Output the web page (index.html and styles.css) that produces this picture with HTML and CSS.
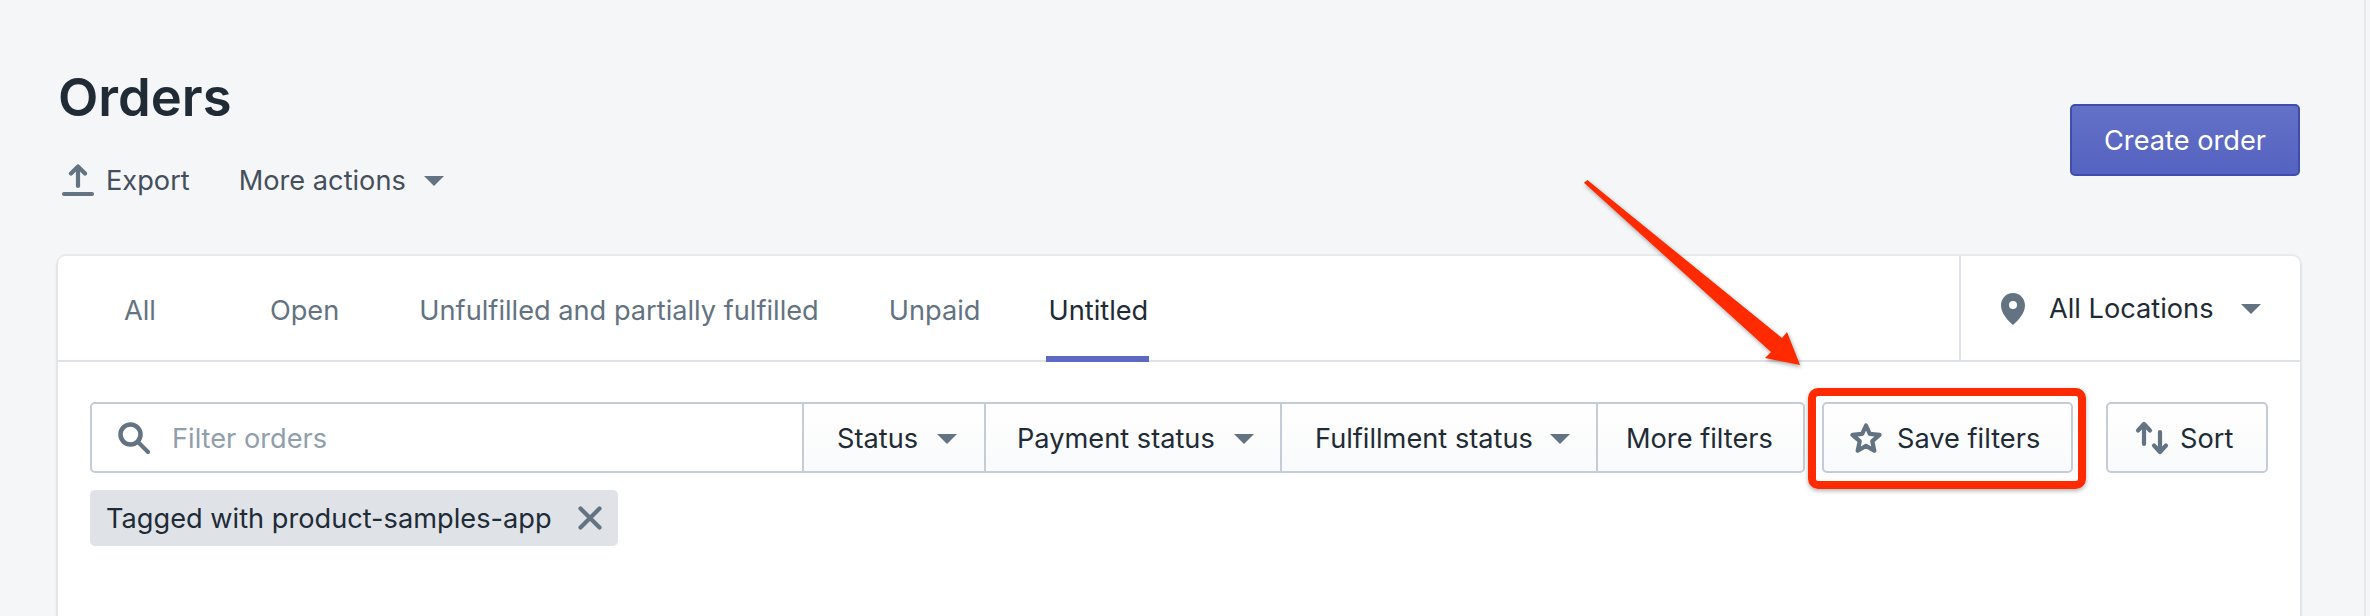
FILE: index.html
```html
<!DOCTYPE html>
<html lang="en">
<head>
<meta charset="utf-8">
<title>Orders</title>
<link rel="stylesheet" href="styles.css">
</head>
<body>
<main class="page">
  <header class="page-header">
    <div class="heading">
      <h1 class="title">Orders</h1>
      <div class="actions">
        <span class="action action-export">
          <svg class="icon-export" viewBox="0 0 32 32"><path d="M16 22 V3 M9 9.500 L16 2.500 L23 9.500" fill="none" stroke="#637381" stroke-width="4.200" stroke-linecap="round" stroke-linejoin="round"/><path d="M2 30 H30" stroke="#637381" stroke-width="4" stroke-linecap="round"/></svg>
          Export
        </span>
        <span class="action">More actions <i class="caret caret-more"></i></span>
      </div>
    </div>
    <button class="primary">Create order</button>
  </header>

  <section class="card">
    <div class="tabbar">
      <nav class="tabs">
        <span class="tab tab-all">All</span>
        <span class="tab tab-open">Open</span>
        <span class="tab tab-unf">Unfulfilled and partially fulfilled</span>
        <span class="tab tab-unp">Unpaid</span>
        <span class="tab tab-active">Untitled</span>
      </nav>
      <div class="locations">
        <svg class="icon-pin" viewBox="0 0 24 32"><path fill-rule="evenodd" d="M12 0 C5 0 0 5.500 0 12.500 C0 20 7 28 12 32 C17 28 24 20 24 12.500 C24 5.500 19 0 12 0 Z M12 8 a4 4 0 1 1 0 8 a4 4 0 0 1 0 -8 Z" fill="#637381"/></svg>
        <span class="loc-label">All Locations</span>
        <i class="caret caret-loc"></i>
      </div>
    </div>
    <div class="filters">
      <div class="filter-row">
        <div class="filter-group">
          <div class="search">
            <svg class="icon-search" viewBox="0 0 32 32"><circle cx="12.500" cy="12.500" r="10" fill="none" stroke="#637381" stroke-width="4.500"/><path d="M20 20 L30 30" stroke="#637381" stroke-width="4" stroke-linecap="round"/></svg>
            <span class="placeholder">Filter orders</span>
          </div>
          <div class="seg seg-status">Status <i class="caret"></i></div>
          <div class="seg seg-pay">Payment status <i class="caret"></i></div>
          <div class="seg seg-ful">Fulfillment status <i class="caret"></i></div>
          <div class="seg seg-more">More filters</div>
        </div>
        <button class="btn btn-save">
          <svg class="icon-star" viewBox="0 0 32 32"><path d="M16 3.500 L19.800 11.800 L29.500 12.900 L22.300 19.200 L24.300 28.800 L16 23.900 L7.700 28.800 L9.700 19.200 L2.500 12.900 L12.200 11.800 Z" fill="none" stroke="#637381" stroke-width="4.200" stroke-linejoin="round"/></svg>
          Save filters
        </button>
        <button class="btn btn-sort">
          <svg class="icon-sort" viewBox="0 0 34 34"><path d="M9 23 V3.500 M3 9.500 L9 3 L15 9.500 M25 11 V30.500 M19 24.500 L25 31 L31 24.500" fill="none" stroke="#637381" stroke-width="4.200" stroke-linecap="round" stroke-linejoin="round"/></svg>
          Sort
        </button>
      </div>
      <div class="tag">
        <span>Tagged with product-samples-app</span>
        <svg class="icon-x" viewBox="0 0 24 24"><path d="M2.500 2.500 L21.500 21.500 M21.500 2.500 L2.500 21.500" stroke="#637381" stroke-width="4.200" stroke-linecap="round"/></svg>
      </div>
    </div>
  </section>

  <div class="highlight"></div>
  <svg class="arrow" viewBox="0 0 240 210" width="240" height="210">
    <path d="M0 4.700 L3.300 2 L198 160 L203 154 L216 187 L181 180 L187 174 Z" fill="#ff2a00"/>
  </svg>
  <div class="edge"></div>
</main>
</body>
</html>
```
FILE: styles.css
```css
* { box-sizing: border-box; }
html, body { margin: 0; height: 100%; }
body {
  background: #f4f6f8;
  font-family: Inter, "Liberation Sans", sans-serif;
  font-size: 27.2px;
  color: #212b36;
  overflow: hidden;
}
.page { position: relative; height: 616px; padding: 0 70px 0 58px; overflow: hidden; }

.page-header { display: flex; justify-content: space-between; height: 256px; padding-top: 61px; }
.title { margin: 0; font-size: 52.5px; line-height: 72px; font-weight: 600; color: #212b36; }
.actions { display: flex; align-items: center; margin-top: 31px; padding-left: 4px; color: #454f5b; }
.action { display: inline-flex; align-items: center; }
.action-export { margin-right: 49px; color: #454f5b; }
.icon-export { width: 32px; height: 32px; margin-right: 12px; margin-top: -2px; }
.caret { display: inline-block; width: 0; height: 0; border-left: 10px solid transparent; border-right: 10px solid transparent; border-top: 10px solid #637381; margin-left: 19px; }
.caret-more { margin-left: 18px; }

.primary {
  margin-top: 43px; width: 230px; height: 72px; padding-top: 2px;
  background: linear-gradient(#6371c7, #5563c1);
  border: 2px solid #3f4eae; border-radius: 5px;
  color: #fff; font: inherit;
}

.card {
  height: 400px; background: #fff; border-radius: 8px 8px 0 0;
  box-shadow: 0 0 0 2px rgba(63,63,68,.05), 0 2px 4px rgba(63,63,68,.1);
}
.tabbar { display: flex; justify-content: space-between; height: 106px; border-bottom: 2px solid #dfe3e8; }
.tabs { display: flex; }
.tab { position: relative; color: #637381; line-height: 110px; height: 106px; }
.tab-all { margin-left: 66px; }
.tab-open { margin-left: 114px; }
.tab-unf { margin-left: 80px; }
.tab-unp { margin-left: 70px; }
.tab-active { margin-left: 68px; color: #212b36; }
.tab-active::after { content: ""; position: absolute; left: -2px; right: -1px; bottom: 0; height: 6px; background: #5c6ac4; }
.locations { display: flex; align-items: center; width: 341px; height: 104px; padding: 1px 0 0 40px; border-left: 2px solid #dfe3e8; }
.icon-pin { width: 24px; height: 32px; margin-right: 24px; }
.caret-loc { margin-left: 27px; }

.filters { padding: 40px 32px 0; }
.filter-row { display: flex; }
.filter-group {
  display: flex; height: 71px; width: 1715px; background: linear-gradient(#fff, #f9fafb);
  border: 2px solid #c4cdd5; border-radius: 5px;
}
.search { display: flex; align-items: center; width: 710px; background: #fff; padding-left: 26px; border-radius: 4px 0 0 4px; }
.icon-search { width: 32px; height: 32px; margin-right: 22px; }
.placeholder { color: #919eab; padding-top: 2px; }
.seg { display: flex; align-items: center; padding: 2px 0 0 33px; border-left: 2px solid #c4cdd5; color: #212b36; }
.seg-status { width: 182px; }
.seg-pay { width: 296px; padding-left: 31px; }
.seg-ful { width: 316px; padding-left: 33px; }
.seg-more { flex: 1; padding-left: 28px; }
.seg .caret { margin-left: 19px; }
.seg-ful .caret { margin-left: 17px; }

.btn {
  display: flex; align-items: center; height: 71px;
  background: linear-gradient(#fff, #f9fafb);
  border: 2px solid #c4cdd5; border-radius: 5px;
  color: #212b36; font: inherit; padding: 2px 0 0;
}
.btn-save { width: 251px; margin-left: 17px; padding-left: 26px; }
.btn-sort { width: 162px; margin-left: 33px; padding-left: 27px; }
.icon-star { width: 32px; height: 32px; margin-right: 15px; margin-top: -2px; }
.icon-sort { width: 34px; height: 34px; margin-right: 11px; margin-top: -2px; }

.tag {
  display: inline-flex; align-items: center; height: 56px; margin-top: 17px;
  padding: 0 16px 0 16px; background: #dfe3e8; border-radius: 5px; color: #212b36;
}
.icon-x { width: 24px; height: 24px; margin-left: 26px; }

.highlight {
  position: absolute; left: 1808px; top: 388px; width: 278px; height: 101px;
  border: 8px solid #ff2a00; border-radius: 10px;
  box-shadow: 0 2px 4px rgba(0,0,0,.3);
}
.arrow { position: absolute; left: 1584px; top: 178px; filter: drop-shadow(1px 2px 2px rgba(0,0,0,.35)); }
.edge { position: absolute; top: 0; right: 4px; bottom: 0; width: 2px; background: #e6e8eb; }
```
